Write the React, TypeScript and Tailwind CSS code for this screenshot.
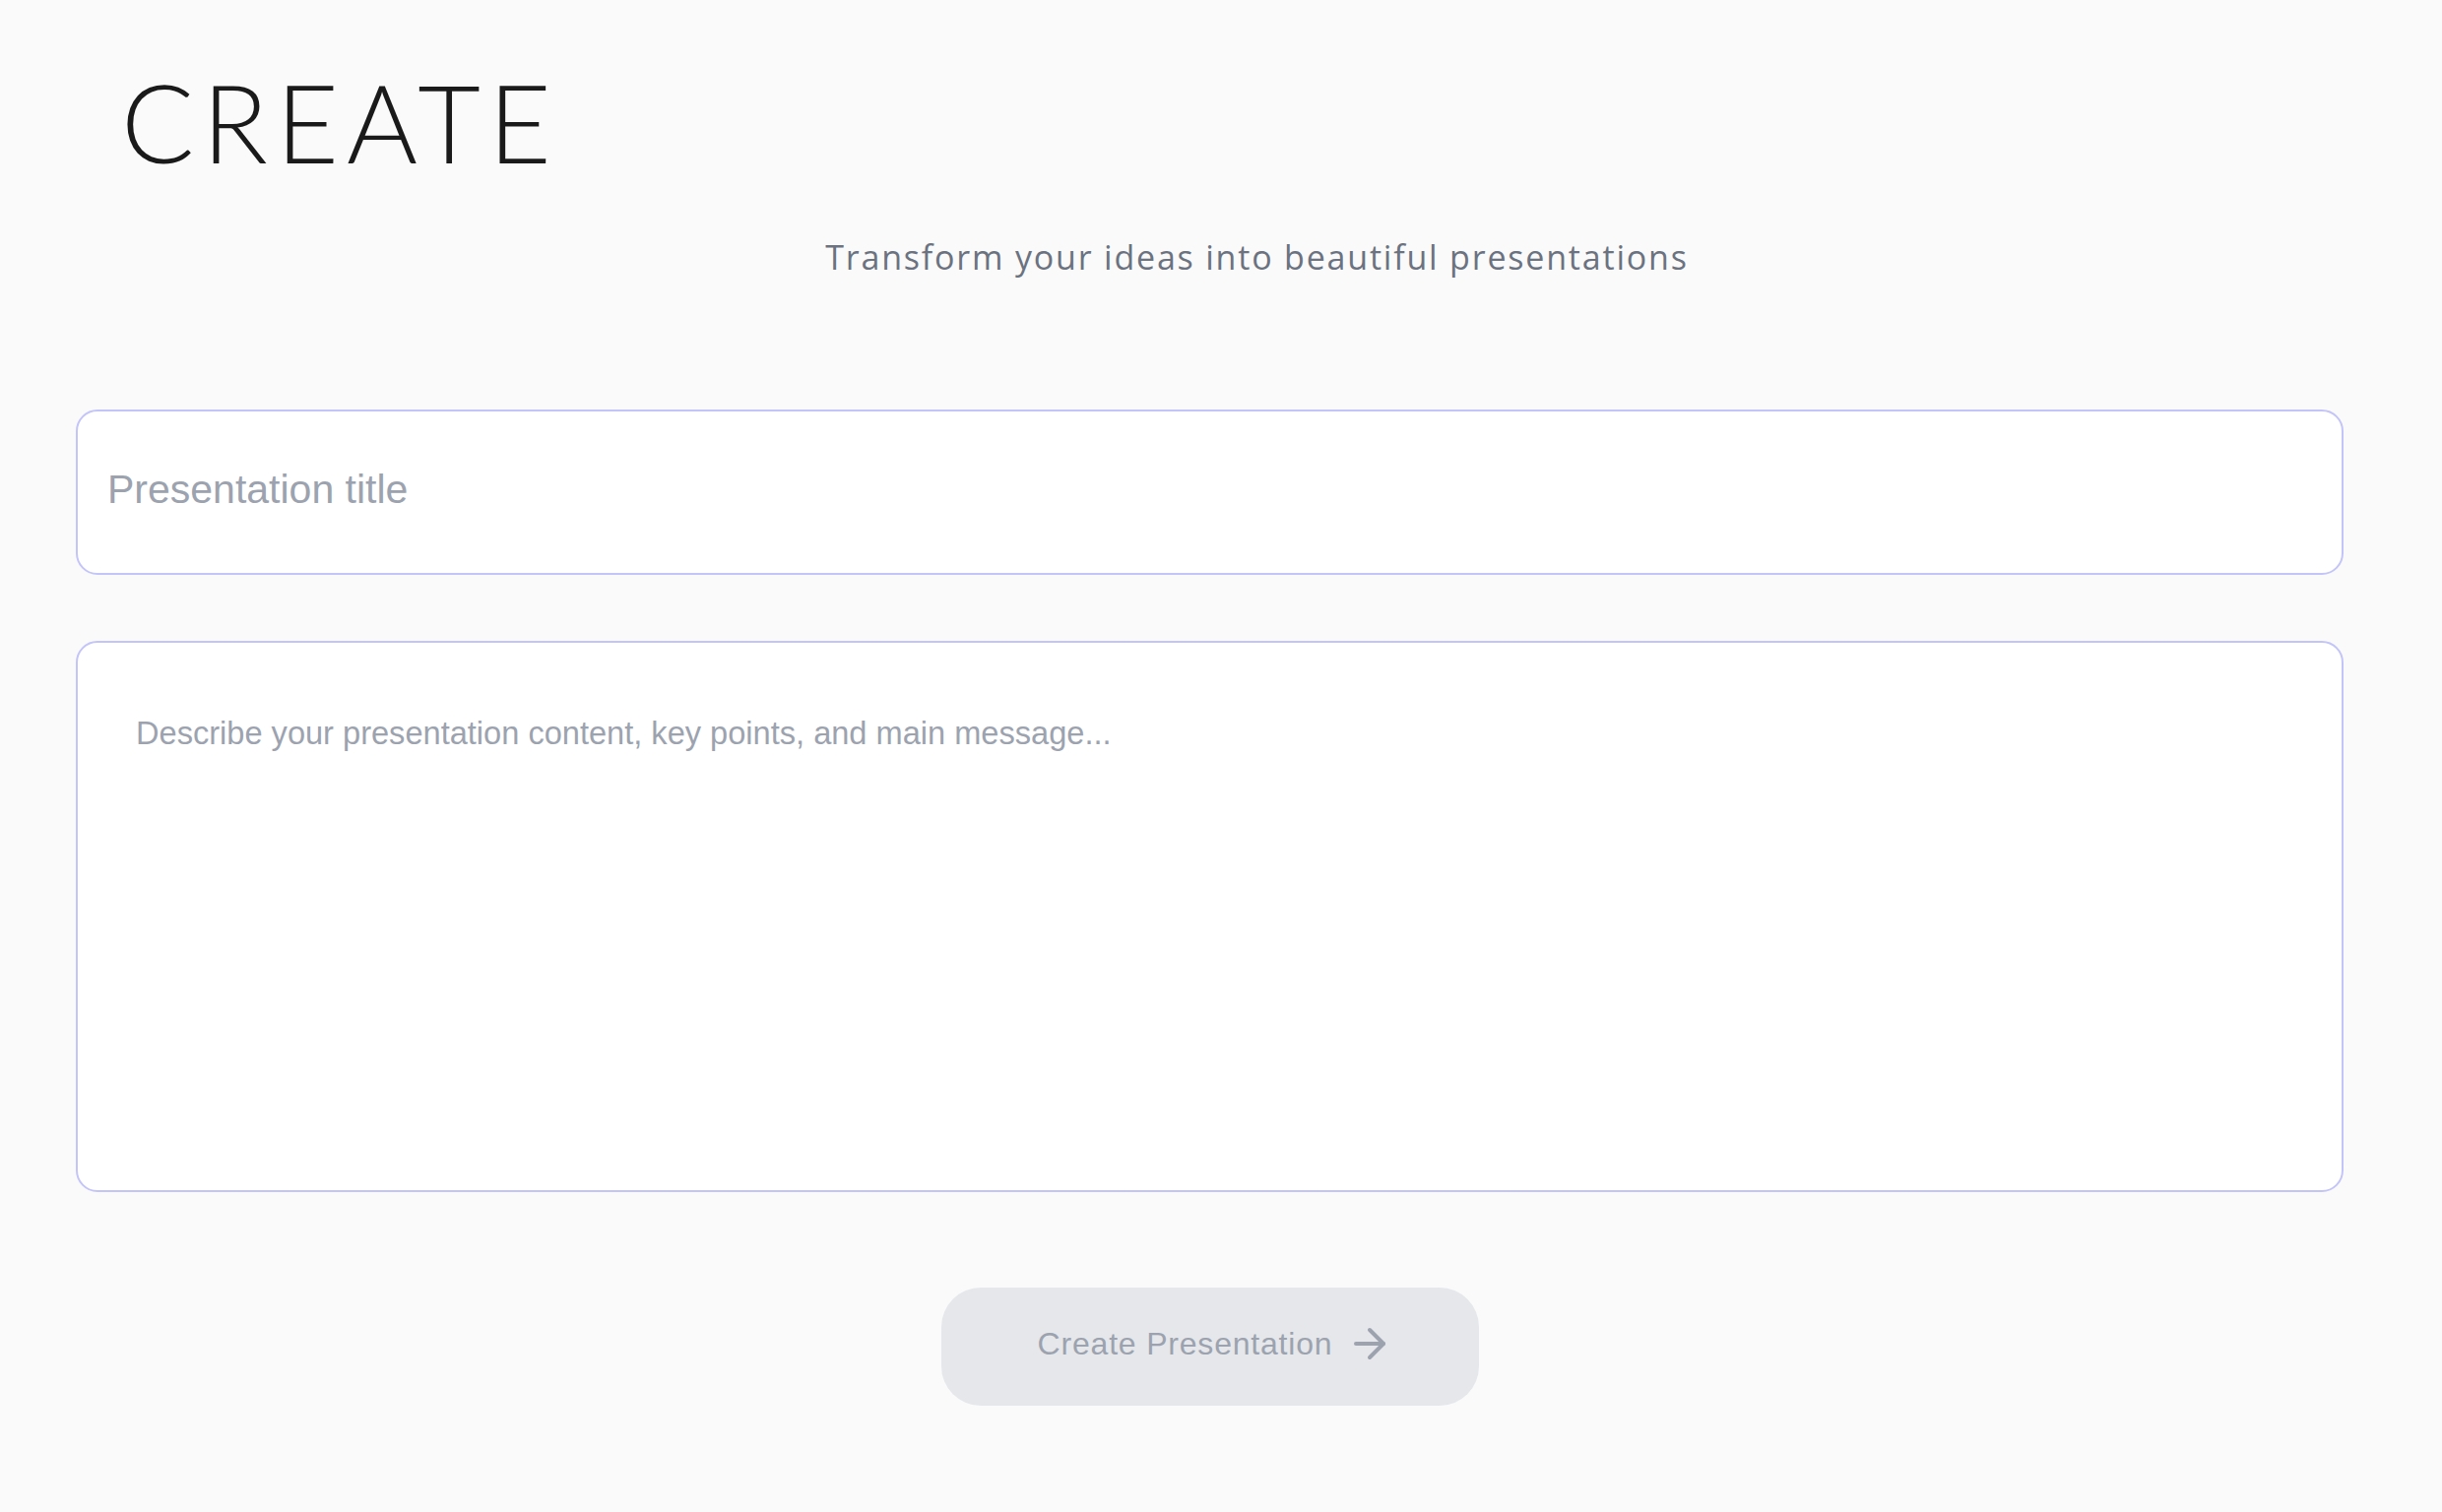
import { ArrowRight } from "lucide-react";

export default function App() {
  return (
    <div className="min-h-screen w-full bg-[#fafafa] pl-[77px] pr-[100px]">
      <h1 className="ml-[46px] pt-[68px] font-['Lato',sans-serif] text-[110px] font-light leading-none tracking-[8px] text-[#1a1a1a]">
        CREATE
      </h1>
      <p className="mt-[66px] pl-[96px] text-center font-['Open_Sans',sans-serif] text-[34px] leading-none tracking-[1.8px] text-[#6b7280]">
        Transform your ideas into beautiful presentations
      </p>

      <div className="mt-[138px] flex flex-col gap-[67px]">
        <input
          type="text"
          placeholder="Presentation title"
          className="h-[168px] w-full rounded-[22px] border-2 border-[#c3c4f8] bg-white pl-[30px] pb-[6px] font-['Liberation_Sans',Arial,sans-serif] text-[41px] text-[#111827] outline-none placeholder:text-[#9ca3af]"
        />
        <textarea
          placeholder="Describe your presentation content, key points, and main message..."
          className="h-[560px] w-full resize-none rounded-[22px] border-2 border-[#c3c4f8] bg-white px-[59px] pt-[68px] font-['Liberation_Sans',Arial,sans-serif] text-[32.6px] leading-[1.5] text-[#111827] outline-none placeholder:text-[#9ca3af]"
        />
      </div>

      <div className="mt-[97px] flex justify-center">
        <button
          type="button"
          disabled
          className="flex h-[120px] w-[546px] items-center justify-center gap-[14px] rounded-[40px] bg-[#e5e7eb] pl-[12px] pb-[6px] font-['Liberation_Sans',Arial,sans-serif] text-[32px] tracking-[0.8px] text-[#9ca3af]"
        >
          <span>Create Presentation</span>
          <ArrowRight size={48} strokeWidth={2} />
        </button>
      </div>
    </div>
  );
}
